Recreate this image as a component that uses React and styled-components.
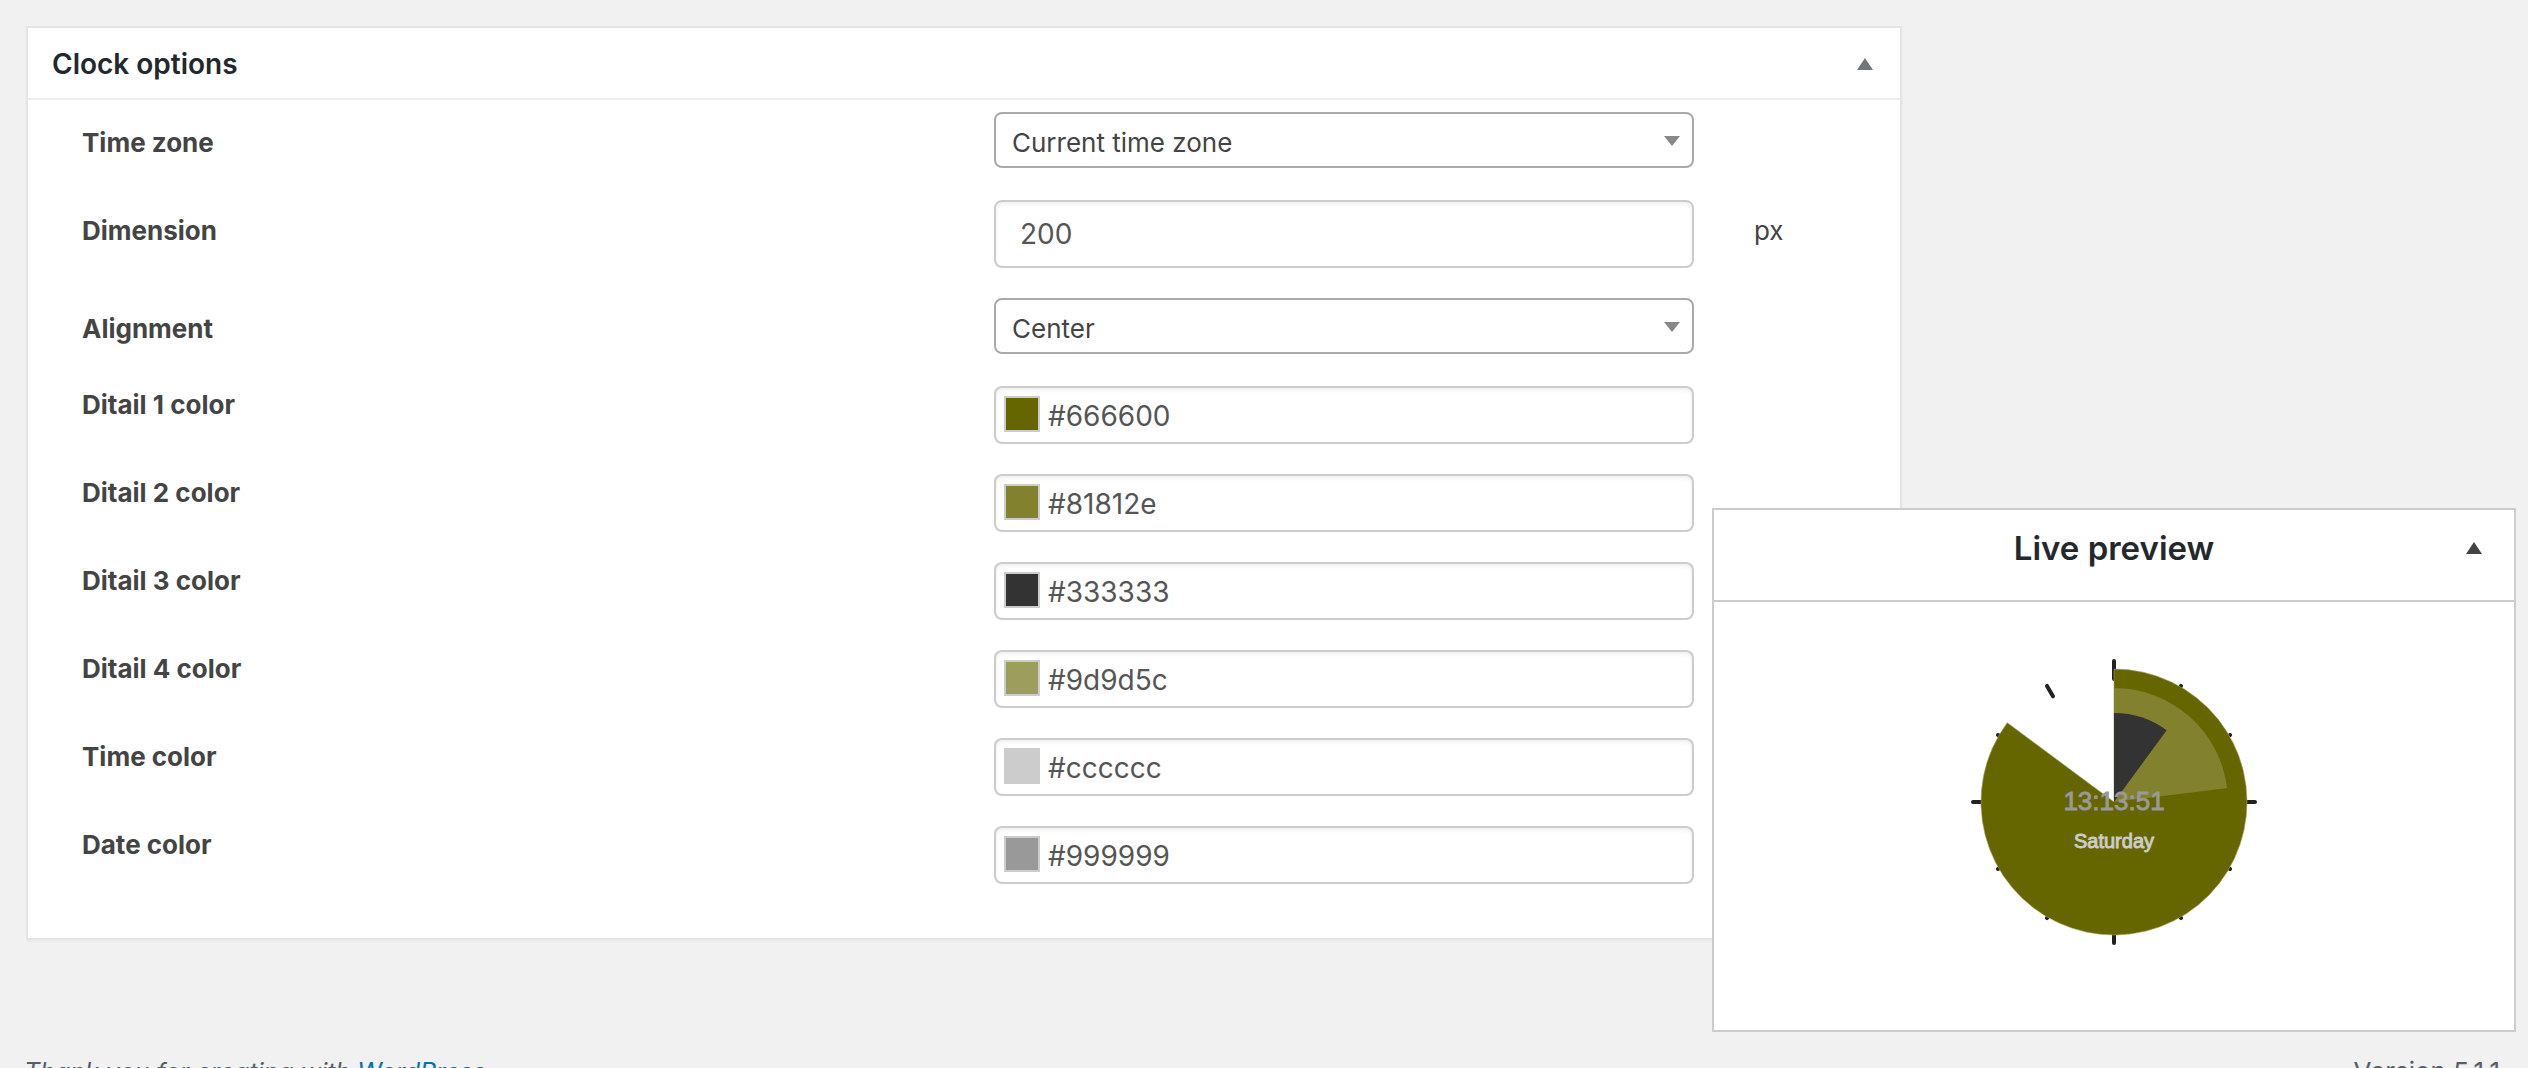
import React, { useState } from "react";
import styled, { createGlobalStyle } from "styled-components";

const GlobalStyle = createGlobalStyle`
  * {
    box-sizing: border-box;
  }
  body {
    margin: 0;
    background: #f1f1f1;
    color: #444;
    font-family: Inter, "Liberation Sans", sans-serif;
    font-size: 26px;
    line-height: 36px;
  }
`;

const Page = styled.div`
  height: 100vh;
  overflow: hidden auto;
  scrollbar-width: none;
  padding: 26px;
`;

const Columns = styled.div`
  display: grid;
  grid-template-columns: minmax(0, 1fr) 600px;
`;

const Panel = styled.section`
  background: #fff;
  border: 2px solid #e5e5e5;
  box-shadow: 0 2px 2px rgba(0, 0, 0, 0.04);
`;

const PanelHeader = styled.header`
  display: flex;
  align-items: center;
  justify-content: space-between;
  height: 72px;
  padding: 2px 27px 0 24px;
  border-bottom: 2px solid #eee;
`;

const PanelTitle = styled.h2`
  margin: 0;
  color: #23282d;
  font-size: 28px;
  font-weight: 600;
`;

const Toggle = styled.button`
  display: flex;
  padding: 0;
  border: 0;
  background: none;
  color: ${({ $color }) => $color};
  cursor: pointer;
`;

const Form = styled.form`
  display: flex;
  flex-direction: column;
  gap: 30px;
  padding: 12px 0 54px 54px;
`;

const Row = styled.div`
  display: grid;
  grid-template-columns: minmax(0, 1fr) 700px 206px;
  align-items: start;
`;

const Label = styled.label`
  padding-top: ${({ $top }) => ($top ? 1 : 13)}px;
  font-weight: 700;
`;

const Unit = styled.span`
  padding: 13px 0 0 60px;
`;

const SelectWrap = styled.div`
  position: relative;
  padding-bottom: 2px;

  svg {
    position: absolute;
    top: 24px;
    right: 14px;
    color: #888;
    pointer-events: none;
  }
`;

const Select = styled.select`
  display: block;
  width: 100%;
  height: 56px;
  padding: 6px 40px 0 16px;
  appearance: none;
  border: 2px solid #aaa;
  border-radius: 8px;
  background: #fff;
  color: #444;
  font: inherit;
`;

const TextInput = styled.input`
  width: 100%;
  height: 68px;
  padding: 0 24px;
  border: 2px solid #ccc;
  border-radius: 8px;
  background: #fff;
  box-shadow: inset 0 2px 4px rgba(0, 0, 0, 0.07);
  color: #555;
  font: inherit;
  font-size: 28px;
`;

const ColorBox = styled.div`
  display: flex;
  align-items: flex-start;
  gap: 8px;
  height: 58px;
  padding: 8px;
  border: 2px solid #ccc;
  border-radius: 8px;
  box-shadow: inset 0 2px 4px rgba(0, 0, 0, 0.07);
`;

const Swatch = styled.input`
  flex: none;
  width: 36px;
  height: 36px;
  padding: 0;
  appearance: none;
  border: 2px solid #ccc;
  background: none;

  &::-webkit-color-swatch-wrapper {
    padding: 0;
  }
  &::-webkit-color-swatch {
    border: 0;
    border-radius: 0;
  }
`;

const HexInput = styled.input`
  flex: 1;
  min-width: 0;
  height: 40px;
  padding: 0;
  border: 0;
  background: none;
  color: #555;
  font: inherit;
  font-size: 28px;
`;

const Preview = styled.aside`
  position: fixed;
  right: 12px;
  bottom: 36px;
  width: 804px;
  border: 2px solid #ccc;
  background: #fff;
`;

const PreviewHeader = styled.header`
  display: grid;
  grid-template-columns: 48px 1fr 48px;
  align-items: center;
  height: 92px;
  padding-bottom: 14px;
  border-bottom: 2px solid #ccc;
`;

const PreviewTitle = styled.h3`
  grid-column: 2;
  margin: 0;
  color: #23282d;
  font-size: 33px;
  font-weight: 600;
  text-align: center;
`;

const PreviewBody = styled.div`
  display: flex;
  justify-content: center;
  height: 428px;
`;

const Footer = styled.footer`
  display: flex;
  align-items: baseline;
  justify-content: space-between;
  margin: 0 2px 0 -2px;
  padding-top: 114px;
  color: #555d66;
`;

const Thanks = styled.span`
  font-size: 25px;
  font-style: italic;

  a {
    color: #0073aa;
  }
`;

const CENTER = 200;

const point = (radius, angle) => {
  const rad = (angle * Math.PI) / 180;
  return [CENTER + radius * Math.sin(rad), CENTER - radius * Math.cos(rad)];
};

const sector = (radius, angle) => {
  const [x, y] = point(radius, angle);
  return `M200 200V${CENTER - radius}A${radius} ${radius} 0 ${
    angle > 180 ? 1 : 0
  } 1 ${x} ${y}Z`;
};

const Up = () => (
  <svg width="16" height="12" viewBox="0 0 16 12" aria-hidden="true">
    <path d="M8 0L16 12H0Z" fill="currentColor" />
  </svg>
);

const Down = () => (
  <svg width="16" height="10" viewBox="0 0 16 10" aria-hidden="true">
    <path d="M0 0H16L8 10Z" fill="currentColor" />
  </svg>
);

const Clock = ({ colors }) => (
  <svg width="400" height="400" viewBox="0 0 400 400">
    {Array.from({ length: 12 }, (_, i) => {
      const major = i % 3 === 0;
      const [x1, y1] = point(major ? 123 : 122, i * 30);
      const [x2, y2] = point(major ? 141 : 134, i * 30);
      return (
        <line
          key={i}
          x1={x1}
          y1={y1}
          x2={x2}
          y2={y2}
          stroke="#222"
          strokeWidth="4"
          strokeLinecap="round"
        />
      );
    })}
    <path
      d={sector(133, 306.6)}
      fill={colors.detail1}
      stroke={colors.detail4}
      strokeWidth="0.6"
    />
    <path d={sector(114, 83)} fill={colors.detail2} />
    <path d={sector(89, 36.3)} fill={colors.detail3} />
    <g
      fontFamily="Liberation Sans, Arial, sans-serif"
      textAnchor="middle"
      strokeWidth="0.9"
    >
      <text
        x="200"
        y="208"
        fontSize="26"
        fill={colors.date}
        stroke={colors.date}
      >
        13:13:51
      </text>
      <text
        x="200"
        y="246"
        fontSize="20"
        fill={colors.time}
        stroke={colors.time}
      >
        Saturday
      </text>
    </g>
  </svg>
);

const colorFields = [
  { name: "detail1", label: "Ditail 1 color" },
  { name: "detail2", label: "Ditail 2 color" },
  { name: "detail3", label: "Ditail 3 color" },
  { name: "detail4", label: "Ditail 4 color" },
  { name: "time", label: "Time color" },
  { name: "date", label: "Date color" },
];

const App = () => {
  const [colors, setColors] = useState({
    detail1: "#666600",
    detail2: "#81812e",
    detail3: "#333333",
    detail4: "#9d9d5c",
    time: "#cccccc",
    date: "#999999",
  });

  const changeColor = (e) =>
    setColors({ ...colors, [e.target.name]: e.target.value });

  return (
    <Page>
      <GlobalStyle />
      <Columns>
        <Panel>
          <PanelHeader>
            <PanelTitle>Clock options</PanelTitle>
            <Toggle type="button" $color="#72777c" aria-label="Toggle panel">
              <Up />
            </Toggle>
          </PanelHeader>
          <Form>
            <Row>
              <Label htmlFor="timezone">Time zone</Label>
              <SelectWrap>
                <Select id="timezone">
                  <option>Current time zone</option>
                </Select>
                <Down />
              </SelectWrap>
            </Row>
            <Row>
              <Label htmlFor="dimension">Dimension</Label>
              <TextInput id="dimension" defaultValue="200" />
              <Unit>px</Unit>
            </Row>
            <Row>
              <Label htmlFor="alignment">Alignment</Label>
              <SelectWrap>
                <Select id="alignment">
                  <option>Center</option>
                </Select>
                <Down />
              </SelectWrap>
            </Row>
            {colorFields.map(({ name, label }) => (
              <Row key={name}>
                <Label htmlFor={name} $top>
                  {label}
                </Label>
                <ColorBox>
                  <Swatch
                    type="color"
                    name={name}
                    aria-label={label}
                    value={colors[name]}
                    onChange={changeColor}
                  />
                  <HexInput
                    id={name}
                    name={name}
                    value={colors[name]}
                    onChange={changeColor}
                  />
                </ColorBox>
              </Row>
            ))}
          </Form>
        </Panel>
      </Columns>
      <Footer>
        <Thanks>
          Thank you for creating with{" "}
          <a href="https://wordpress.org/">WordPress</a>.
        </Thanks>
        <span>Version 5.1.1</span>
      </Footer>
      <Preview>
        <PreviewHeader>
          <PreviewTitle>Live preview</PreviewTitle>
          <Toggle type="button" $color="#444" aria-label="Toggle preview">
            <Up />
          </Toggle>
        </PreviewHeader>
        <PreviewBody>
          <Clock colors={colors} />
        </PreviewBody>
      </Preview>
    </Page>
  );
};

export default App;
